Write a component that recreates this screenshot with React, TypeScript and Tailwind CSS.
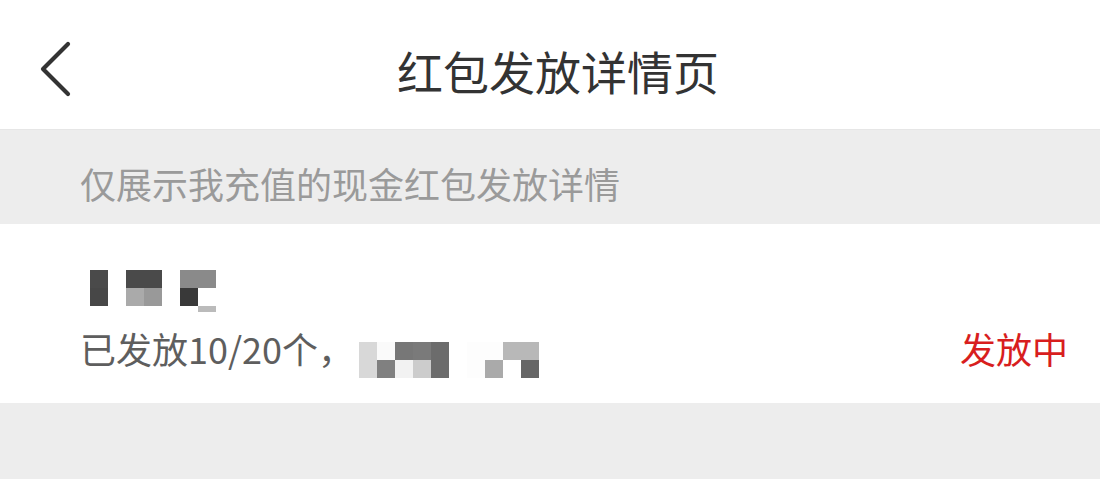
import React from 'react';

const FONT = { fontFamily: '"Noto Sans CJK SC", "Noto Sans", sans-serif' };

type Cell = string | null;

// 打码块：每行一组颜色，null 表示空白
const Mosaic: React.FC<{ rows: Cell[][]; heights: number[] }> = ({ rows, heights }) => (
  <div className="flex flex-col">
    {rows.map((row, r) => (
      <div key={r} className="flex">
        {row.map((c, i) => (
          <div
            key={i}
            className="w-[18px] shrink-0"
            style={{ height: heights[r], backgroundColor: c ?? 'transparent' }}
          />
        ))}
      </div>
    ))}
  </div>
);

const NAME_ROWS: Cell[][] = [
  ['#4a4a4a', null, '#4a4a4a', '#4a4a4a', null, '#8a8a8a', '#8a8a8a'],
  ['#474747', null, '#aaaaaa', '#999999', null, '#393939', null],
  [null, null, null, null, null, null, '#bbbbbb'],
];

const AMOUNT_ROWS: Cell[][] = [
  ['#d8d8d8', '#fafafa', '#777777', '#7a7a7a', '#6c6c6c', null, '#fdfdfd', '#fdfdfd', '#b8b8b8', '#b8b8b8'],
  ['#d8d8d8', '#808080', '#f2f2f2', '#cccccc', '#6c6c6c', null, '#fdfdfd', '#aaaaaa', '#ffffff', '#666666'],
];

export default function App() {
  return (
    <div className="min-h-screen w-full bg-[#ededed]" style={FONT}>
      <header className="grid h-[130px] grid-cols-[1fr_auto_1fr] items-center border-b border-[#e6e6e6] bg-white pt-[10px]">
        <div className="flex pl-[38px] -mt-[2px]">
          <svg width="34" height="56" viewBox="0 0 34 56" fill="none">
            <polyline
              points="30,3 5,28 30,53"
              stroke="#333333"
              strokeWidth="4.2"
              strokeLinecap="round"
              strokeLinejoin="round"
            />
          </svg>
        </div>
        <h1 className="pl-[16px] text-[46px] leading-[46px] font-normal text-[#333333]">红包发放详情页</h1>
        <div />
      </header>

      <div className="h-[94px] pl-[80px] pt-[35px] text-[36px] leading-[36px] text-[#9a9a9a]">
        仅展示我充值的现金红包发放详情
      </div>

      <section className="flex h-[179px] flex-col bg-white pl-[80px] pr-[32px] pt-[46px]">
        <div className="ml-[10px]">
          <Mosaic rows={NAME_ROWS} heights={[18, 18, 6]} />
        </div>
        <div className="mt-[18px] flex items-start">
          <span className="text-[36px] leading-[36px] text-[#5e5e5e]">已发放10/20个，</span>
          <div className="ml-[5px] mt-[12px]">
            <Mosaic rows={AMOUNT_ROWS} heights={[18, 18]} />
          </div>
          <span className="ml-auto text-[36px] leading-[36px] text-[#d81e1e]">发放中</span>
        </div>
      </section>
    </div>
  );
}
